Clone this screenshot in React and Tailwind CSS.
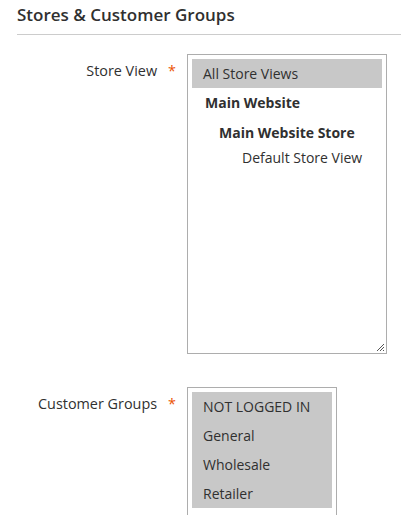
export default function App() {
  return (
    <div className="min-h-[515px] bg-white pl-[17px] pt-[2px] text-[#303030]" style={{ fontFamily: '"Open Sans", "Liberation Sans", sans-serif' }}>
      <h2 className="text-[17px] font-semibold leading-[26px]">Stores &amp; Customer Groups</h2>
      <div className="mt-[6px] h-px bg-[#cccccc]" />

      <div className="mt-[19px] flex">
        <div className="flex w-[159px] justify-end pt-[7px] text-[14.4px] leading-[20px]">
          <span>Store View</span>
          <span className="ml-[11px] text-[#eb5202]">*</span>
        </div>
        <div className="relative ml-[11px] h-[300px] w-[200px] border border-[#adadad] p-[4px] text-[14px]">
          <div className="flex h-[29px] items-center bg-[#c8c8c8] pl-[11px]">All Store Views</div>
          <div className="flex h-[29px] items-center pl-[13px] font-bold">Main Website</div>
          <div className="flex h-[30px] items-center pl-[27px] font-bold">Main Website Store</div>
          <div className="flex h-[21px] items-center pl-[50px]">Default Store View</div>
          <svg className="absolute bottom-[1px] right-[1px]" width="9" height="9" viewBox="0 0 9 9">
            <path d="M1 8 L8 1 M4 8 L8 4 M7 8 L8 7" stroke="#555" strokeWidth="1" />
          </svg>
        </div>
      </div>

      <div className="mt-[33px] flex">
        <div className="flex w-[159px] justify-end pt-[7px] text-[14.4px] leading-[20px]">
          <span>Customer Groups</span>
          <span className="ml-[11px] text-[#eb5202]">*</span>
        </div>
        <div className="ml-[11px] h-[140px] w-[150px] border border-[#adadad] p-[4px] text-[14px]">
          <div className="flex h-[29px] items-center bg-[#c8c8c8] pl-[11px]">NOT LOGGED IN</div>
          <div className="flex h-[29px] items-center bg-[#c8c8c8] pl-[11px]">General</div>
          <div className="flex h-[29px] items-center bg-[#c8c8c8] pl-[11px]">Wholesale</div>
          <div className="flex h-[29px] items-center bg-[#c8c8c8] pl-[11px]">Retailer</div>
        </div>
      </div>
    </div>
  );
}
